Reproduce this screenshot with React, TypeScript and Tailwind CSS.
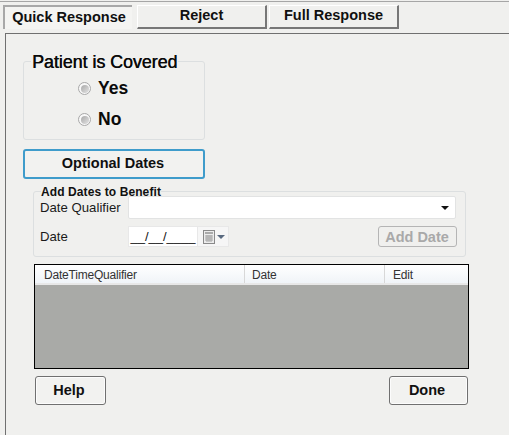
const FONT = "font-['Liberation_Sans',Arial,sans-serif]";

const TABS = [
  { label: "Quick Response", active: true },
  { label: "Reject", active: false },
  { label: "Full Response", active: false },
];

function Tab({ label, active }: { label: string; active: boolean }) {
  if (active) {
    return (
      <div className="flex h-[24px] w-[129px] items-center justify-center border-t-2 border-l-2 border-t-[#a8a8a8] border-l-[#a8a8a8] bg-[#f4f4f2] pl-[1px] text-[14.5px] font-bold text-[#101010]">
        {label}
      </div>
    );
  }
  return (
    <div className="flex h-[24px] w-[130px] items-center justify-center border-r-2 border-b-2 border-t border-l border-r-[#777] border-b-[#777] border-t-[#fff] border-l-[#fff] bg-[#f0f0ee] pb-[1px] text-[14.5px] font-bold text-[#101010]">
      {label}
    </div>
  );
}

function Radio({ label }: { label: string }) {
  return (
    <div className="flex h-[31px] items-center">
      <span className="flex h-[13px] w-[13px] items-center justify-center rounded-full border border-[#a8a8a8] bg-[#f8f8f8]">
        <span className="h-[8px] w-[8px] rounded-full bg-gradient-to-br from-[#a8a8a8] to-[#e4e4e4]" />
      </span>
      <span className="ml-[7px] text-[17.5px] font-bold text-[#0a0a0a]">{label}</span>
    </div>
  );
}

function ActionButton({ label }: { label: string }) {
  return (
    <button className="h-[29px] rounded-[3px] border border-[#707070] bg-[#f2f2f0] pt-[1px] pr-[3px] text-[14.5px] font-bold text-[#101010] shadow-[inset_0_0_0_1px_#fcfcfc]">
      {label}
    </button>
  );
}

function CalendarIcon() {
  return (
    <svg width="30" height="20" viewBox="0 0 30 20">
      <rect x="5.5" y="3.5" width="11" height="13" fill="#ececec" stroke="#8a8a8a" />
      <rect x="7" y="5" width="8" height="2" fill="#aaa" />
      <path d="M7 9h8M7 11h8M7 13h8M9 8v7M11 8v7M13 8v7" stroke="#a4a4a4" strokeWidth="1" />
      <path d="M19 8h8l-4 4z" fill="#5a6a80" />
    </svg>
  );
}

function ColumnHeader({ label, className }: { label: string; className: string }) {
  return (
    <div className={`flex h-full items-center border-r border-[#d8d8d8] pt-[2px] text-[12px] tracking-[-0.2px] text-[#333] ${className}`}>
      {label}
    </div>
  );
}

export default function App() {
  return (
    <div className={`${FONT} relative h-[435px] w-[509px] overflow-hidden bg-[#f0f0ee]`}>
      <div className="mt-[1px] h-[1px] bg-[#a6a6a6]" />

      <div className="flex h-[31px] items-start pt-[3px] pl-[3px]">
        <Tab {...TABS[0]} />
        <div className="ml-[5px]">
          <Tab {...TABS[1]} />
        </div>
        <div className="ml-[2px]">
          <Tab {...TABS[2]} />
        </div>
      </div>

      <div className="ml-[5px] h-[402px] border-t border-l border-[#707070] pt-[27px]">
        <div className="ml-[17px] h-[79px] w-[182px] rounded-[3px] border border-[#dcdfe0]">
          <div className="-mt-[10px] ml-[7px] w-fit bg-[#f0f0ee] px-[1px] text-[17.8px] leading-[20px] text-[#0a0a0a] [text-shadow:0.4px_0_0_#0a0a0a]">
            Patient is Covered
          </div>
          <div className="mt-[1px] ml-[54px]">
            <Radio label="Yes" />
            <Radio label="No" />
          </div>
        </div>

        <button className="mt-[9px] ml-[17px] block h-[30px] w-[182px] rounded-[3px] border-2 border-[#3f9ccb] bg-[#f2f2f0] pr-[2px] text-[14.5px] font-bold text-[#101010]">
          Optional Dates
        </button>

        <div className="mt-[12px] ml-[27px] h-[66px] w-[433px] rounded-[3px] border border-[#dcdfe0]">
          <div className="-mt-[7px] ml-[7px] w-fit bg-[#f0f0ee] text-[12px] leading-[14px] font-bold tracking-[0.1px] text-[#111]">
            Add Dates to Benefit
          </div>
          <div className="mt-[-3px] flex h-[23px] items-center pl-[6px]">
            <span className="w-[88px] text-[13.2px] text-[#1a1a1a]">Date Qualifier</span>
            <div className="flex h-[23px] w-[328px] items-center justify-end rounded-[2px] border border-[#e2e3e3] bg-white pr-[6px]">
              <span className="h-0 w-0 border-x-[4px] border-t-[4px] border-x-transparent border-t-[#111]" />
            </div>
          </div>
          <div className="mt-[7px] flex items-center pl-[6px]">
            <span className="w-[88px] pt-[1px] text-[13.2px] text-[#1a1a1a]">Date</span>
            <div className="flex h-[21px] w-[70px] items-center justify-center border border-[#e8e8e8] bg-white text-[13px] leading-none text-[#111]">
              __/__/____
            </div>
            <div className="flex h-[21px] w-[31px] items-center justify-center border border-l-0 border-[#e8e8e8] bg-[#f6f6f6]">
              <CalendarIcon />
            </div>
            <button className="ml-[149px] h-[21px] w-[79px] rounded-[3px] border border-[#b5b5b5] bg-[#f0f0ee] pr-[1px] text-[14.5px] font-bold text-[#a9a9a9]">
              Add Date
            </button>
          </div>
        </div>

        <div className="mt-[7px] ml-[28px] flex h-[105px] w-[435px] flex-col border border-black bg-[#a9aaa7]">
          <div className="flex h-[20px] border-b-2 border-[#e8e8e8] bg-gradient-to-b from-white to-[#f0f4f8]">
            <ColumnHeader label="DateTimeQualifier" className="w-[210px] pl-[9px]" />
            <ColumnHeader label="Date" className="w-[140px] pl-[7px]" />
            <ColumnHeader label="Edit" className="flex-1 border-r-0 pl-[8px]" />
          </div>
        </div>

        <div className="mt-[7px] ml-[29px] flex w-[433px] justify-between">
          <div className="flex w-[71px] flex-col">
            <ActionButton label="Help" />
          </div>
          <div className="flex w-[79px] flex-col">
            <ActionButton label="Done" />
          </div>
        </div>
      </div>
    </div>
  );
}
